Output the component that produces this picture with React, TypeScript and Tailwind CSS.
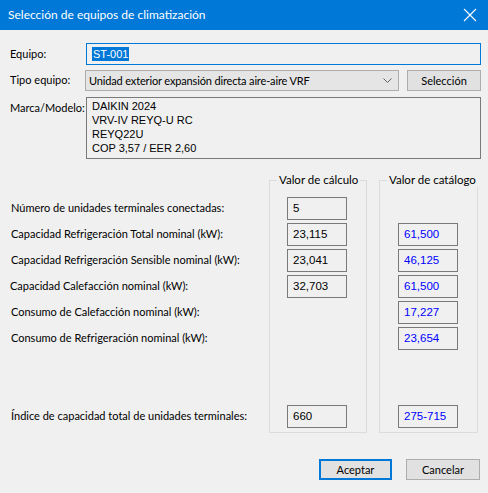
const rows = [
  { label: "Número de unidades terminales conectadas:", calc: "5", cat: "" },
  { label: "Capacidad Refrigeración Total nominal (kW):", calc: "23,115", cat: "61,500" },
  { label: "Capacidad Refrigeración Sensible nominal (kW):", calc: "23,041", cat: "46,125" },
  { label: "Capacidad Calefacción nominal (kW):", calc: "32,703", cat: "61,500" },
  { label: "Consumo de Calefacción nominal (kW):", calc: "", cat: "17,227" },
  { label: "Consumo de Refrigeración nominal (kW):", calc: "", cat: "23,654" },
];

const indice = { label: "Índice de capacidad total de unidades terminales:", calc: "660", cat: "275-715" };

function ValueBox({ value, blue }: { value: string; blue?: boolean }) {
  return (
    <div
      className={`h-[23px] w-[60px] border border-[#7a7a7a] pl-[5px] pt-[2px] text-[11.5px] leading-[16px] font-['Liberation_Sans',sans-serif] ${
        blue ? "text-[#0000ff]" : "text-black"
      }`}
    >
      {value}
    </div>
  );
}

function Group({ title, values, last, blue, boxLeft }: { title: string; values: string[]; last: string; blue?: boolean; boxLeft: string }) {
  return (
    <fieldset className="border border-[#dcdcdc] h-[260px] flex flex-col min-w-0">
      <legend className="ml-[7px] px-[2px] text-[11.5px] leading-[14px] text-black whitespace-nowrap">{title}</legend>
      <div className={`flex flex-col gap-[3px] pt-[10px] ${boxLeft}`}>
        {values.map((v, i) => (
          <div key={i} className="h-[23px]">
            {(v !== "" || (blue ? i > 0 : i < 4)) && <ValueBox value={v} blue={blue} />}
          </div>
        ))}
      </div>
      <div className={`mt-[55px] ${boxLeft}`}>
        <ValueBox value={last} blue={blue} />
      </div>
    </fieldset>
  );
}

export default function App() {
  return (
    <div className="w-[488px] h-[493px] bg-[#f0f0f0] font-['Lato',sans-serif] text-black flex flex-col whitespace-nowrap">
      <div className="h-[30px] bg-[#0078d7] flex items-center justify-between pl-[8px] pr-[11px]">
        <span className="text-white text-[12px] leading-none">Selección de equipos de climatización</span>
        <svg width="14" height="14" viewBox="0 0 14 14" className="stroke-white" fill="none" strokeWidth="1.1">
          <path d="M1 1L13 13M13 1L1 13" />
        </svg>
      </div>

      <div className="flex flex-col pl-[10px] pr-[7px] pt-[13px] text-[11px]">
        <div className="flex items-center h-[22px]">
          <span className="w-[76px]">Equipo:</span>
          <div className="flex-1 h-[22px] border border-[#0078d7] flex items-center pl-[5px]">
            <span className="bg-[#0078d7] text-white text-[11px] leading-[14px] px-[1px] font-['Liberation_Sans',sans-serif]">ST-001</span>
          </div>
        </div>

        <div className="flex items-center h-[21px] mt-[5px]">
          <span className="w-[75px]">Tipo equipo:</span>
          <div className="w-[314px] h-[21px] border border-[#adadad] bg-[#e5e5e5] flex items-center justify-between pl-[3px] pr-[6px]">
            <span className="leading-none tracking-[-0.15px]">Unidad exterior expansión directa aire-aire VRF</span>
            <svg width="9" height="6" viewBox="0 0 9 6" fill="none" stroke="#606060" strokeWidth="1">
              <path d="M0.5 0.5L4.5 4.5L8.5 0.5" />
            </svg>
          </div>
          <button className="ml-[8px] w-[74px] h-[21px] border border-[#adadad] bg-[#e1e1e1] leading-none">Selección</button>
        </div>

        <div className="flex items-start mt-[6px]">
          <span className="w-[76px] text-right pr-[5px] pt-[3px]">Marca/Modelo:</span>
          <div className="flex-1 h-[62px] border border-[#7a7a7a] pl-[5px] pt-[1px] text-[11px] leading-[14px] font-['Liberation_Sans',sans-serif]">
            <div>DAIKIN 2024</div>
            <div>VRV-IV REYQ-U RC</div>
            <div>REYQ22U</div>
            <div>COP 3,57 / EER 2,60</div>
          </div>
        </div>
      </div>

      <div className="flex pl-[11px] pr-[10px] mt-[14px]">
        <div className="flex-1 flex flex-col pt-[24px] text-[11px]">
          <div className="flex flex-col gap-[3px]">
            {rows.map((r, i) => (
              <div key={i} className={`h-[23px] flex items-center ${i === 3 ? "-ml-[1px]" : ""}`}>
                {r.label}
              </div>
            ))}
          </div>
          <div className="h-[23px] flex items-center mt-[55px]">{indice.label}</div>
        </div>
        <div className="w-[98px]">
          <Group title="Valor de cálculo" values={rows.map((r) => r.calc)} last={indice.calc} boxLeft="pl-[17px]" />
        </div>
        <div className="w-[99px] ml-[12px]">
          <Group title="Valor de catálogo" values={rows.map((r) => r.cat)} last={indice.cat} blue boxLeft="pl-[18px]" />
        </div>
      </div>

      <div className="flex justify-end gap-[14px] pr-[8px] mt-[26px] text-[11px]">
        <button className="w-[73px] h-[21px] border-2 border-[#0078d7] bg-[#e1e1e1] leading-none">Aceptar</button>
        <button className="w-[74px] h-[21px] border border-[#adadad] bg-[#e1e1e1] leading-none">Cancelar</button>
      </div>
    </div>
  );
}
